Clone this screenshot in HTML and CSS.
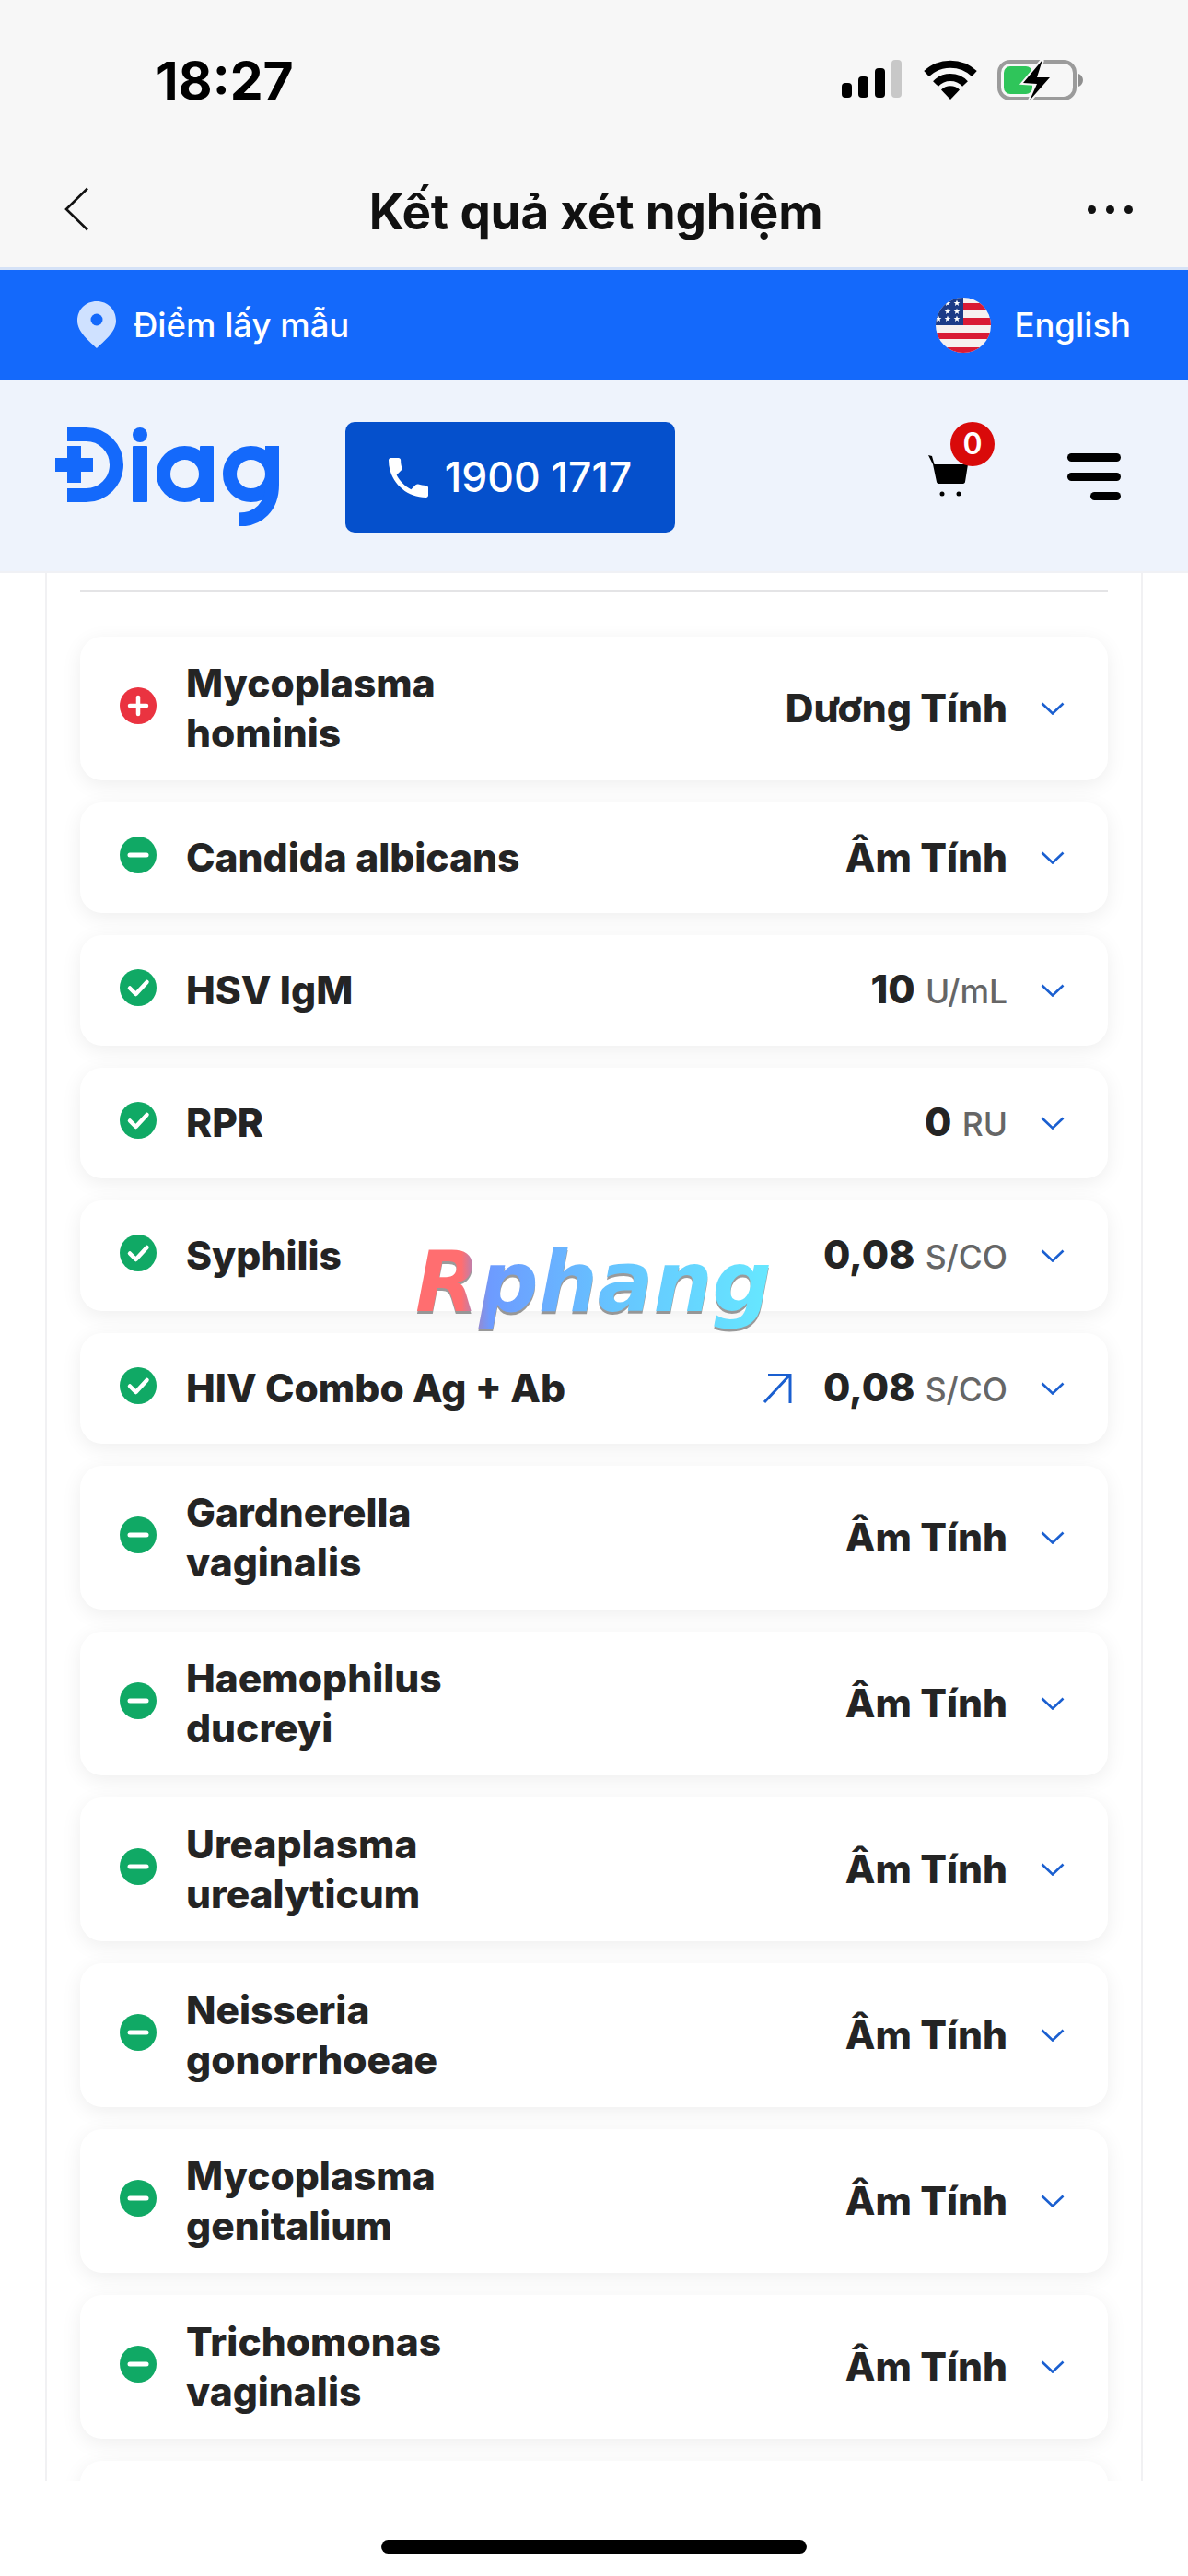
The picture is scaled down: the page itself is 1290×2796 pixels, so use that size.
FILE: index.html
```html
<!DOCTYPE html>
<html lang="vi">
<head>
<meta charset="utf-8">
<title>Kết quả xét nghiệm</title>
<link rel="stylesheet" href="styles.css">
</head>
<body>
<svg class="defs" width="0" height="0">
	<symbol id="ic-plus" viewBox="0 0 40 40"><circle cx="20" cy="20" r="20" fill="#ea3340"/><path d="M20 11v18M11 20h18" stroke="#fff" stroke-width="4.5" stroke-linecap="round"/></symbol>
	<symbol id="ic-minus" viewBox="0 0 40 40"><circle cx="20" cy="20" r="20" fill="#10a965"/><path d="M11 20h18" stroke="#fff" stroke-width="5" stroke-linecap="round"/></symbol>
	<symbol id="ic-check" viewBox="0 0 40 40"><circle cx="20" cy="20" r="20" fill="#10a965"/><path d="M11 20.5l6.5 6.5L29.5 14" fill="none" stroke="#fff" stroke-width="4.5" stroke-linecap="round" stroke-linejoin="round"/></symbol>
	<symbol id="ic-down" viewBox="0 0 26 14"><path d="M1.5 1.5L13 12.5 24.5 1.5" fill="none" stroke="#1a5fd0" stroke-width="2.6"/></symbol>
	<polygon id="star" points="0,-3.4 1,-1 3.4,-1 1.5,.5 2.1,3 0,1.5 -2.1,3 -1.5,.5 -3.4,-1 -1,-1" fill="#fff"/>
</svg>

<div class="phone">
	<div class="status">
		<span class="clock">18:27</span>
		<div class="status-icons">
			<div class="signal"><i></i><i></i><i></i><i></i></div>
			<svg class="wifi" viewBox="0 0 60 43"><path d="M4 15A38 38 0 0 1 56 15" fill="none" stroke="#000" stroke-width="8"/><path d="M14 26A22 22 0 0 1 46 26" fill="none" stroke="#000" stroke-width="8"/><path d="M30 43L20 32.5A14 14 0 0 1 40 32.5Z"/></svg>
			<svg class="battery" viewBox="0 0 94 44"><rect x="2" y="2" width="82" height="40" rx="12" fill="none" stroke="#9b9b9b" stroke-width="4"/><rect x="7" y="7" width="31" height="30" rx="7" fill="#2fc55a"/><path d="M88 15c3 1 5 4 5 7s-2 6-5 7z" fill="#8f8f8f"/><polygon points="49,0 28,25 43,26 35,44 57,19 43,19" stroke="#f7f7f7" stroke-width="4" paint-order="stroke"/></svg>
		</div>
	</div>
	<div class="nav">
		<svg class="nav-back" viewBox="0 0 28 48"><path d="M26 1.5L3 24l23 22.5" fill="none" stroke="#111" stroke-width="2.6"/></svg>
		<h1>Kết quả xét nghiệm</h1>
		<div class="nav-more"><i></i><i></i><i></i></div>
	</div>

	<div class="topbar">
		<div class="topbar-item">
			<svg class="pin" viewBox="0 0 42 51"><path d="M21 0C9 0 0 9 0 21c0 13 14 23 21 30 7-7 21-17 21-30C42 9 33 0 21 0z" fill="#cfe1ff"/><circle cx="21" cy="20" r="6.5" fill="#1469fb"/></svg>
			<span>Điểm lấy mẫu</span>
		</div>
		<div class="topbar-item lang">
			<svg class="flag" viewBox="0 0 60 60">
				<clipPath id="flag-clip"><circle cx="30" cy="30" r="30"/></clipPath>
				<g clip-path="url(#flag-clip)">
					<rect width="60" height="60" fill="#f6f0f0"/>
					<path d="M30 6h30v8H30zM30 22h30v8H30zM0 38h60v7H0zM0 54h60v6H0z" fill="#d91a35"/>
					<rect width="30" height="30" fill="#1c3b87"/>
					<use href="#star" x="13" y="6"/><use href="#star" x="23" y="6"/>
					<use href="#star" x="13" y="15"/><use href="#star" x="23" y="15"/>
					<use href="#star" x="3" y="23"/><use href="#star" x="13" y="23"/><use href="#star" x="23" y="23"/>
				</g>
			</svg>
			<span>English</span>
		</div>
	</div>

	<div class="header">
		<svg class="logo" viewBox="0 0 243 107" role="img" aria-label="Diag">
			<g fill="#1469fb">
				<path d="M13 7.5H33.5A33 33 0 0 1 33.5 73.5H13" fill="none" stroke="#1469fb" stroke-width="15"/>
				<path d="M13 20h15v13h13v15H28v12H13V48H0V33h13z"/>
				<circle cx="92" cy="8" r="8"/>
				<rect x="84" y="20" width="16" height="61" rx="1"/>
				<circle cx="140.5" cy="50.5" r="23" fill="none" stroke="#1469fb" stroke-width="15"/>
				<rect x="157" y="20" width="15" height="61" rx="1"/>
				<circle cx="212.5" cy="50.5" r="23" fill="none" stroke="#1469fb" stroke-width="15"/>
				<path d="M235.5 20V62C235.5 86 221 100 199 100" fill="none" stroke="#1469fb" stroke-width="15"/>
			</g>
		</svg>
		<div class="hotline">
			<svg class="phone-icon" viewBox="3 3 18 18"><path d="M6.62 10.79c1.44 2.83 3.76 5.14 6.59 6.59l2.2-2.2c.27-.27.67-.36 1.02-.24 1.12.37 2.33.57 3.57.57.55 0 1 .45 1 1V20c0 .55-.45 1-1 1-9.39 0-17-7.61-17-17 0-.55.45-1 1-1h3.5c.55 0 1 .45 1 1 0 1.25.2 2.45.57 3.57.11.35.03.74-.25 1.02l-2.2 2.2z" fill="#fff"/></svg>
			<span>1900 1717</span>
		</div>
		<div class="cart">
			<svg class="cart-icon" viewBox="0 0 46 48"><path d="M1 2l4 1 2.500 9h36.500l-3 19c-.3 1.500-1.500 2-3 2H13c-1.500 0-2.700-.5-3-2L6 12z"/><circle cx="16" cy="44" r="2.500"/><circle cx="34" cy="44" r="2.500"/></svg>
			<span class="cart-badge">0</span>
		</div>
		<div class="burger"><i></i><i></i><i class="short"></i></div>
	</div>

	<div class="content">
		<div class="panel">
			<div class="rule"></div>

			<div class="row"><svg class="mark"><use href="#ic-plus"/></svg><div class="name">Mycoplasma hominis</div><div class="val">Dương Tính</div><svg class="down"><use href="#ic-down"/></svg></div>
			<div class="row"><svg class="mark"><use href="#ic-minus"/></svg><div class="name">Candida albicans</div><div class="val">Âm Tính</div><svg class="down"><use href="#ic-down"/></svg></div>
			<div class="row"><svg class="mark"><use href="#ic-check"/></svg><div class="name">HSV IgM</div><div class="val">10 <small>U/mL</small></div><svg class="down"><use href="#ic-down"/></svg></div>
			<div class="row"><svg class="mark"><use href="#ic-check"/></svg><div class="name">RPR</div><div class="val">0 <small>RU</small></div><svg class="down"><use href="#ic-down"/></svg></div>
			<div class="row"><svg class="mark"><use href="#ic-check"/></svg><div class="name">Syphilis</div><div class="val">0,08 <small>S/CO</small></div><svg class="down"><use href="#ic-down"/></svg></div>
			<div class="row"><svg class="mark"><use href="#ic-check"/></svg><div class="name">HIV Combo Ag + Ab</div><svg class="trend" viewBox="0 0 32 34"><path d="M2 32L29 3M6 2.500h24V33" fill="none" stroke="#1a5fd0" stroke-width="3"/></svg><div class="val">0,08 <small>S/CO</small></div><svg class="down"><use href="#ic-down"/></svg></div>
			<div class="row"><svg class="mark"><use href="#ic-minus"/></svg><div class="name">Gardnerella vaginalis</div><div class="val">Âm Tính</div><svg class="down"><use href="#ic-down"/></svg></div>
			<div class="row"><svg class="mark"><use href="#ic-minus"/></svg><div class="name">Haemophilus ducreyi</div><div class="val">Âm Tính</div><svg class="down"><use href="#ic-down"/></svg></div>
			<div class="row"><svg class="mark"><use href="#ic-minus"/></svg><div class="name">Ureaplasma urealyticum</div><div class="val">Âm Tính</div><svg class="down"><use href="#ic-down"/></svg></div>
			<div class="row"><svg class="mark"><use href="#ic-minus"/></svg><div class="name">Neisseria gonorrhoeae</div><div class="val">Âm Tính</div><svg class="down"><use href="#ic-down"/></svg></div>
			<div class="row"><svg class="mark"><use href="#ic-minus"/></svg><div class="name">Mycoplasma genitalium</div><div class="val">Âm Tính</div><svg class="down"><use href="#ic-down"/></svg></div>
			<div class="row"><svg class="mark"><use href="#ic-minus"/></svg><div class="name">Trichomonas vaginalis</div><div class="val">Âm Tính</div><svg class="down"><use href="#ic-down"/></svg></div>
			<div class="row"></div>
		</div>
	</div>

	<div class="home"><div class="home-bar"></div></div>
	<div class="watermark">Rphang</div>
</div>
</body>
</html>
```

FILE: styles.css
```css
html,body{margin:0;padding:0;background:#fff;}
body{font-family:"Inter","Noto Sans",sans-serif;color:#242424;}
.defs{position:absolute;}
.phone{position:relative;width:1290px;height:2796px;overflow:hidden;display:flex;flex-direction:column;}

/* status bar + app nav */
.status{height:170px;flex:none;box-sizing:border-box;background:#f7f7f7;display:flex;justify-content:space-between;padding:57px 113px 0 169px;}
.clock{font-size:57px;font-weight:700;line-height:62px;color:#000;}
.status-icons{display:flex;align-items:flex-start;padding-top:8px;}
.signal{display:flex;align-items:flex-end;gap:7px;height:41px;margin-right:23px;}
.signal i{display:block;width:11px;border-radius:4px;background:#000;}
.signal i:nth-child(1){height:16px;}
.signal i:nth-child(2){height:23px;}
.signal i:nth-child(3){height:32px;}
.signal i:nth-child(4){height:41px;background:#c8c8c8;}
.wifi{width:60px;height:43px;margin-right:21px;}
.battery{width:94px;height:44px;}

.nav{height:123px;flex:none;background:#f7f7f7;display:flex;align-items:flex-start;justify-content:space-between;box-sizing:border-box;padding:33px 60px 0 69px;border-bottom:3px solid #d5e2f7;}
.nav-back{width:28px;height:48px;}
.nav h1{margin:0 0 0 16px;font-size:53px;line-height:56px;font-weight:700;color:#111;letter-spacing:-.2px;position:relative;top:-1px;}
.nav-more{display:flex;gap:11px;padding-top:20px;}
.nav-more i{display:block;width:9px;height:9px;border-radius:50%;background:#111;}

/* blue strip */
.topbar{height:119px;flex:none;background:#1469fb;color:#fff;display:flex;align-items:center;justify-content:space-between;padding:0 62px 0 84px;box-sizing:border-box;font-size:36.5px;font-weight:500;}
.topbar-item{display:flex;align-items:center;gap:19px;}
.lang{gap:25px;}
.pin{width:42px;height:51px;}
.flag{width:60px;height:60px;}

/* logo row */
.header{height:210px;flex:none;box-sizing:border-box;background:#eef3fc;display:flex;align-items:flex-start;padding:46px 73px 0 60px;border-bottom:2px solid #f0f1f5;}
.logo{width:243px;height:107px;margin-top:6px;}
.hotline{width:358px;height:120px;margin-left:72px;background:#0550cc;border-radius:10px;display:flex;align-items:center;justify-content:center;gap:18px;color:#fff;font-size:44.5px;font-weight:500;}
.phone-icon{width:43px;height:43px;}
.cart{position:relative;width:73px;height:80px;margin-left:auto;margin-right:79px;margin-top:6px;}
.cart-icon{position:absolute;left:0;top:28px;width:46px;height:48px;}
.cart-badge{position:absolute;left:25px;top:-6px;width:48px;height:48px;border-radius:50%;background:#d90a0a;color:#fff;font-size:32px;font-weight:600;line-height:48px;text-align:center;}
.burger{display:flex;flex-direction:column;align-items:flex-end;gap:12px;width:58px;margin-top:34px;}
.burger i{display:block;width:58px;height:9px;border-radius:5px;background:#000;}
.burger i.short{width:33px;}

/* result list */
.content{height:2071px;flex:none;overflow:hidden;background:#fff;}
.panel{box-sizing:border-box;width:1192px;margin-left:49px;min-height:100%;border-left:2px solid #f1f1f3;border-right:2px solid #f1f1f3;padding:18px 36px 0;}
.rule{height:3px;background:#e4e4e6;margin-bottom:48px;}
.row{box-sizing:border-box;min-height:120px;background:#fff;border-radius:24px;box-shadow:0 5px 22px rgba(0,0,0,.07);margin-bottom:24px;padding:24px 47px 24px 43px;display:flex;align-items:center;}
.mark{width:40px;height:40px;flex:none;margin-right:33px;position:relative;top:-3px;}
.name{max-width:425px;font-size:42.5px;line-height:54px;font-weight:800;position:relative;left:-1px;}
.val{margin-left:auto;font-size:42.5px;line-height:54px;font-weight:800;white-space:nowrap;}
.val small{font-size:35.5px;font-weight:500;color:#666;margin-left:2px;}
.trend{width:32px;height:34px;margin-left:auto;margin-right:34px;flex:none;}
.trend + .val{margin-left:0;}
.down{width:26px;height:14px;flex:none;margin-left:36px;}

.home{flex:1;background:#fff;position:relative;}
.home-bar{width:462px;height:15px;border-radius:8px;background:#000;margin:64px auto 0;}

/* watermark sits on top of the list */
.watermark{position:absolute;left:451px;top:1336px;font-family:"DejaVu Sans",sans-serif;font-style:italic;font-weight:700;font-size:90px;line-height:112px;background:linear-gradient(90deg,#ff6e70 0,#ff6e70 13%,#8f8cd8 18%,#6d9bff 21%,#66c4ff 55%,#66e8ff 100%);-webkit-background-clip:text;background-clip:text;color:transparent;filter:drop-shadow(0 3px 0 rgba(100,100,100,.65));}
```
